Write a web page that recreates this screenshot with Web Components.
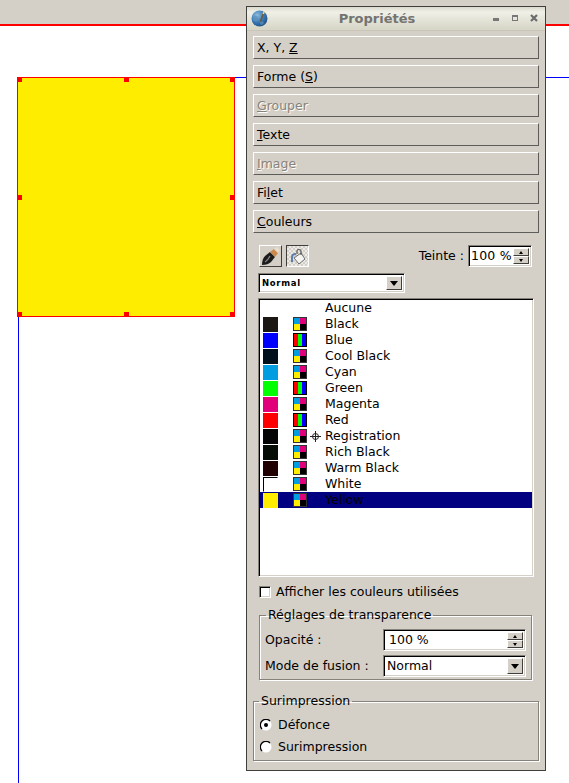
<!DOCTYPE html>
<html lang="fr">
<head>
<meta charset="utf-8">
<title>Propriétés</title>
<style>
  html, body { margin: 0; height: 100%; background: #fff; overflow: hidden; }
  body { font: 12.5px/16px "DejaVu Sans", sans-serif; color: #000; }
</style>
</head>
<body>
<doc-canvas>
  <doc-shape></doc-shape>
  <props-window>
    <section-btn><span>X, Y, <u>Z</u></span></section-btn>
    <section-btn><span>Forme (<u>S</u>)</span></section-btn>
    <section-btn disabled><span><u>G</u>rouper</span></section-btn>
    <section-btn><span><u>T</u>exte</span></section-btn>
    <section-btn disabled><span><u>I</u>mage</span></section-btn>
    <section-btn><span>Fi<u>l</u>et</span></section-btn>
    <section-btn><span><u>C</u>ouleurs</span></section-btn>
    <colors-panel></colors-panel>
  </props-window>
</doc-canvas>

<script>
  const BEVEL_SUNKEN = `
    border: 1px solid; border-color: #85827c #fff #fff #85827c;
    box-shadow: inset 1px 1px 0 #000, inset -1px -1px 0 #d4d0c8;`;

  const ARROW_BTN = `
    background: #d4d0c8;
    border: 1px solid; border-color: #fff #403f3c #403f3c #fff;
    box-sizing: border-box;`;

  class DocCanvas extends HTMLElement {
    constructor() {
      super();
      this.attachShadow({ mode: 'open' }).innerHTML = `
        <style>
          :host { display: block; position: relative; width: 569px; height: 783px; background: #fff; overflow: hidden; }
          .band { height: 24px; background: #d4d0c8; }
          .red { height: 2px; background: #f00; }
          .guide-h { position: absolute; left: 235px; right: 0; top: 77px; height: 1px; background: #00f; }
          .guide-v { position: absolute; left: 18px; top: 317px; bottom: 0; width: 1px; background: #00f; }
        </style>
        <div class="band"></div>
        <div class="red"></div>
        <div class="guide-h"></div>
        <div class="guide-v"></div>
        <slot></slot>
      `;
    }
  }

  class DocShape extends HTMLElement {
    constructor() {
      super();
      this.attachShadow({ mode: 'open' }).innerHTML = `
        <style>
          :host { display: block; position: absolute; left: 17px; top: 77px; width: 218px; height: 240px; box-sizing: border-box; background: #ffed00; border: 1px solid #f00; }
          i { position: absolute; width: 5px; height: 5px; background: #f00; }
        </style>
        <i style="left:-1px;top:-1px"></i>
        <i style="left:106px;top:-1px"></i>
        <i style="right:-1px;top:-1px"></i>
        <i style="left:-1px;top:117px"></i>
        <i style="right:-1px;top:117px"></i>
        <i style="left:-1px;bottom:-1px"></i>
        <i style="left:106px;bottom:-1px"></i>
        <i style="right:-1px;bottom:-1px"></i>
      `;
    }
  }

  class PropsWindow extends HTMLElement {
    constructor() {
      super();
      this.attachShadow({ mode: 'open' }).innerHTML = `
        <style>
          :host { display: block; position: absolute; left: 246px; top: 6px; width: 300px; height: 765px; box-sizing: border-box; background: #d4d0c8; border: 1px solid #403f3c; }
          .title { height: 23px; display: flex; align-items: center; background: linear-gradient(#d9d9cd, #f0f0e8 22%, #e2e2d6 60%, #d6d5c6); border-bottom: 1px solid #c9c6b8; position: relative; }
          .logo { position: absolute; left: 4px; top: 3px; }
          .name { flex: 1; text-align: center; font: bold 13px/16px "DejaVu Sans", sans-serif; color: #737370; padding-right: 38px; }
          .ctl { position: absolute; top: 7px; }
          .body { display: flex; flex-direction: column; gap: 6px; padding: 5px 6px 0; }
        </style>
        <div class="title">
          <svg class="logo" width="17" height="17" viewBox="0 0 17 17">
            <defs><radialGradient id="g" cx=".35" cy=".3" r=".8"><stop offset="0" stop-color="#8fbde0"/><stop offset=".55" stop-color="#3a78b4"/><stop offset="1" stop-color="#1c4a7c"/></radialGradient></defs>
            <circle cx="8.5" cy="8.5" r="8" fill="url(#g)"/>
            <path d="M2 7c2-2 4-1 5 0s0 3-1 4-3 0-4-1zM9 12c2-1 4 0 4 1l-2 2c-1 0-2-1-2-3z" fill="#5f92bb" opacity=".7"/>
            <path d="M13 2l-3.600 9.500" stroke="#6d5a35" stroke-width="1.600"/>
            <path d="M13.200 1.500l-1 2.500" stroke="#e8d9a0" stroke-width="1.600"/>
          </svg>
          <span class="name">Propriétés</span>
          <svg class="ctl" style="left:245px" width="8" height="8" viewBox="0 0 8 8"><rect x="1" y="4" width="6" height="3" fill="#777"/></svg>
          <svg class="ctl" style="left:264px" width="8" height="8" viewBox="0 0 8 8"><path d="M1 1h6v6h-6z M2 3v3h4v-3z" fill="#777" fill-rule="evenodd"/></svg>
          <svg class="ctl" style="left:283px" width="8" height="8" viewBox="0 0 8 8"><path d="M1 1l6 6M7 1l-6 6" stroke="#6c6c6c" stroke-width="2.200"/></svg>
        </div>
        <div class="body"><slot></slot></div>
      `;
    }
  }

  class SectionBtn extends HTMLElement {
    constructor() {
      super();
      this.attachShadow({ mode: 'open' }).innerHTML = `
        <style>
          :host { display: flex; align-items: center; height: 23px; box-sizing: border-box; padding-left: 3px; border: 1px solid; border-color: #fff #5e5c58 #5e5c58 #fff; }
          :host([disabled]) { color: #86837d; text-shadow: 1px 1px 0 #fff; }
        </style>
        <slot></slot>
      `;
    }
  }

  class SpinBox extends HTMLElement {
    constructor() {
      super();
      this.attachShadow({ mode: 'open' }).innerHTML = `
        <style>
          :host { display: flex; box-sizing: border-box; background: #fff; ${BEVEL_SUNKEN} padding: 2px; align-items: stretch; }
          .txt { flex: 1; display: flex; align-items: center; padding-left: var(--pad, 0); }
          .arrows { width: 16px; display: flex; flex-direction: column; }
          .arrows div { flex: 1; ${ARROW_BTN} display: flex; align-items: center; justify-content: center; }
          .up { border-bottom: 3px solid #000; border-left: 2px solid transparent; border-right: 2px solid transparent; }
          .dn { border-top: 3px solid #000; border-left: 2px solid transparent; border-right: 2px solid transparent; }
        </style>
        <div class="txt"><slot></slot></div>
        <div class="arrows"><div><span class="up"></span></div><div><span class="dn"></span></div></div>
      `;
    }
  }

  class ComboBox extends HTMLElement {
    constructor() {
      super();
      this.attachShadow({ mode: 'open' }).innerHTML = `
        <style>
          :host { display: flex; box-sizing: border-box; background: #fff; ${BEVEL_SUNKEN} padding: 2px; align-items: stretch; }
          .txt { flex: 1; display: flex; align-items: center; padding-left: 1px; }
          .btn { width: 16px; ${ARROW_BTN} display: flex; align-items: center; justify-content: center; }
          .btn span { border-top: 5px solid #000; border-left: 4px solid transparent; border-right: 4px solid transparent; }
        </style>
        <div class="txt"><slot></slot></div>
        <div class="btn"><span></span></div>
      `;
    }
  }

  class GroupBox extends HTMLElement {
    constructor() {
      super();
      this.attachShadow({ mode: 'open' }).innerHTML = `
        <style>
          :host { display: block; }
          fieldset { margin: 0; padding: 0; min-width: 0; height: 100%; box-sizing: border-box; border: 1px solid #85827c; box-shadow: 1px 1px 0 #fff, inset 1px 1px 0 #fff; }
          legend { padding: 0 2px; margin-left: var(--legend, 6px); line-height: 16px; }
        </style>
        <fieldset>
          <legend>${this.getAttribute('label')}</legend>
          <slot></slot>
        </fieldset>
      `;
    }
  }

  class RadioOpt extends HTMLElement {
    constructor() {
      super();
      const dot = this.hasAttribute('checked') ? '<circle cx="6" cy="6" r="2" fill="#000"/>' : '';
      this.attachShadow({ mode: 'open' }).innerHTML = `
        <style>
          :host { display: flex; align-items: center; gap: 6px; height: 16px; }
          svg { display: block; }
        </style>
        <svg width="12" height="12" viewBox="0 0 12 12">
          <circle cx="6" cy="6" r="5.500" fill="#fff"/>
          <path d="M2 10A5.500 5.500 0 0 1 10 2" fill="none" stroke="#000" stroke-width="1.300"/>
          ${dot}
        </svg>
        <slot></slot>
      `;
    }
  }

  class ColorRow extends HTMLElement {
    constructor() {
      super();
      const swatch = this.getAttribute('swatch');
      const kind = this.getAttribute('kind');
      const cmyk = `<rect width="14" height="14" fill="#333"/><rect x="1" y="1" width="6" height="6" fill="#009ee0"/><rect x="7" y="1" width="6" height="6" fill="#e2007a"/><rect x="1" y="7" width="6" height="6" fill="#ffed00"/><rect x="7" y="7" width="6" height="6" fill="#000"/>`;
      const rgb = `<rect width="14" height="14" fill="#000"/><rect x="1" y="1" width="4" height="12" fill="#f00"/><rect x="5" y="1" width="4" height="12" fill="#0f0"/><rect x="9" y="1" width="4" height="12" fill="#00f"/>`;
      const icon = kind ? `<svg width="14" height="14" viewBox="0 0 14 14" shape-rendering="crispEdges">${kind === 'rgb' ? rgb : cmyk}</svg>` : '';
      const reg = this.hasAttribute('reg') ? `<svg width="11" height="11" viewBox="0 0 11 11"><circle cx="5.500" cy="5.500" r="3" fill="none" stroke="#222"/><path d="M5.500 0v11M0 5.500h11" stroke="#222"/></svg>` : '';
      this.attachShadow({ mode: 'open' }).innerHTML = `
        <style>
          :host { display: grid; grid-template-columns: 15px 29px 18px 1fr; height: 16px; align-items: center; padding-left: 3px; }
          :host([selected]) { background: #000080; }
          .sw { width: 15px; height: 15px; box-sizing: border-box; }
          .ic { margin-left: 15px; height: 14px; }
          .ic svg, .rg svg { display: block; }
          .rg { margin-left: 3px; }
          .tx { white-space: nowrap; }
        </style>
        <div class="sw" style="${swatch ? `background:${swatch};` : ''}${swatch === '#fff' ? 'border:1px solid #000;border-right-color:#fff;border-bottom-color:#fff;' : ''}"></div>
        <div class="ic">${icon}</div>
        <div class="rg">${reg}</div>
        <div class="tx"><slot></slot></div>
      `;
    }
  }

  const mockColors = [
    { name: 'Aucune' },
    { name: 'Black', swatch: '#1a1714', kind: 'cmyk' },
    { name: 'Blue', swatch: '#00f', kind: 'rgb' },
    { name: 'Cool Black', swatch: '#000f1c', kind: 'cmyk' },
    { name: 'Cyan', swatch: '#009ee0', kind: 'cmyk' },
    { name: 'Green', swatch: '#0f0', kind: 'rgb' },
    { name: 'Magenta', swatch: '#e2007a', kind: 'cmyk' },
    { name: 'Red', swatch: '#f00', kind: 'rgb' },
    { name: 'Registration', swatch: '#050505', kind: 'cmyk', reg: true },
    { name: 'Rich Black', swatch: '#050d06', kind: 'cmyk' },
    { name: 'Warm Black', swatch: '#200000', kind: 'cmyk' },
    { name: 'White', swatch: '#fff', kind: 'cmyk' },
    { name: 'Yellow', swatch: '#ffed00', kind: 'cmyk', selected: true },
  ];

  class ColorsPanel extends HTMLElement {
    constructor() {
      super();
      const rows = mockColors.map(c => `
        <color-row ${c.swatch ? `swatch="${c.swatch}"` : ''} ${c.kind ? `kind="${c.kind}"` : ''} ${c.reg ? 'reg' : ''} ${c.selected ? 'selected' : ''}>${c.name}</color-row>`).join('');
      this.attachShadow({ mode: 'open' }).innerHTML = `
        <style>
          :host { display: block; margin-top: 6px; }
          .tools { display: flex; align-items: center; height: 22px; padding-left: 6px; padding-right: 7px; }
          .tool { width: 23px; height: 22px; box-sizing: border-box; display: flex; align-items: center; justify-content: center; }
          .pen { border: 1px solid; border-color: #fff #403f3c #403f3c #fff; }
          .bucket { margin-left: 4px; border: 1px solid; border-color: #403f3c #fff #fff #403f3c; background: repeating-conic-gradient(#eceae6 0 25%, #d4d0c8 0 50%) 0 0 / 4px 4px; }
          .teinte { margin-left: auto; margin-right: 4px; }
          .teinte-spin { width: 64px; height: 22px; letter-spacing: .2px; }
          .blend { width: 147px; height: 20px; margin: 6px 0 5px 5px; font: bold 8.5px/12px "DejaVu Sans", sans-serif; letter-spacing: .7px; }
          .list { height: 279px; margin: 0 5px 0 5px; box-sizing: border-box; background: #fff; ${BEVEL_SUNKEN} padding: 1px; }
          .used { display: flex; align-items: center; gap: 5px; margin: 8px 0 0 6px; height: 13px; }
          .box { width: 12px; height: 12px; box-sizing: border-box; background: #fff; ${BEVEL_SUNKEN} }
          .transp { height: 73px; margin: 9px 7px 0 6px; }
          .grid { display: grid; grid-template-columns: 118px 143px; row-gap: 4px; align-items: center; padding: 6px 0 0 5px; }
          .grid .f { height: 22px; }
          .over { height: 68px; margin-top: 13px; --legend: 5px; }
          .radios { display: flex; flex-direction: column; gap: 6px; padding: 8px 0 0 6px; }
        </style>
        <div class="tools">
          <div class="tool pen">
            <svg width="20" height="20" viewBox="0 0 20 20">
              <path d="M1 19c0-4 1-7 3-9l5-4 5 5-4 5c-2 2-5 3-9 3z" fill="#1c1c1c"/>
              <path d="M4 16c2-1 4-4 5-6" stroke="#8c8c8c" stroke-width="1.200" fill="none"/>
              <path d="M9 6l5 5 3-4-4-4z" fill="#c98a4b"/>
              <path d="M13 3l4 4 2-3-3-3z" fill="#e8dccb"/>
            </svg>
          </div>
          <div class="tool bucket">
            <svg width="19" height="19" viewBox="0 0 19 19">
              <path d="M4 15v-5c0-2 2-3 4-3" fill="none" stroke="#5b7fb0" stroke-width="2"/>
              <path d="M6 11l7-5 4 6-6 5z" fill="#f4f4f2" stroke="#6b6b6b"/>
              <path d="M9 7V4c0-2 4-2 4 0v4" fill="none" stroke="#555" stroke-width="1.200"/>
            </svg>
          </div>
          <span class="teinte">Teinte :</span>
          <spin-box class="teinte-spin">100 %</spin-box>
        </div>
        <combo-box class="blend">Normal</combo-box>
        <div class="list">${rows}</div>
        <div class="used"><span class="box"></span>Afficher les couleurs utilisées</div>
        <group-box class="transp" label="Réglages de transparence">
          <div class="grid">
            <span>Opacité :</span>
            <spin-box class="f" style="--pad:3px">100 %</spin-box>
            <span>Mode de fusion :</span>
            <combo-box class="f">Normal</combo-box>
          </div>
        </group-box>
        <group-box class="over" label="Surimpression">
          <div class="radios">
            <radio-opt checked>Défonce</radio-opt>
            <radio-opt>Surimpression</radio-opt>
          </div>
        </group-box>
      `;
    }
  }

  customElements.define('doc-canvas', DocCanvas);
  customElements.define('doc-shape', DocShape);
  customElements.define('props-window', PropsWindow);
  customElements.define('section-btn', SectionBtn);
  customElements.define('spin-box', SpinBox);
  customElements.define('combo-box', ComboBox);
  customElements.define('group-box', GroupBox);
  customElements.define('radio-opt', RadioOpt);
  customElements.define('color-row', ColorRow);
  customElements.define('colors-panel', ColorsPanel);
</script>
</body>
</html>
